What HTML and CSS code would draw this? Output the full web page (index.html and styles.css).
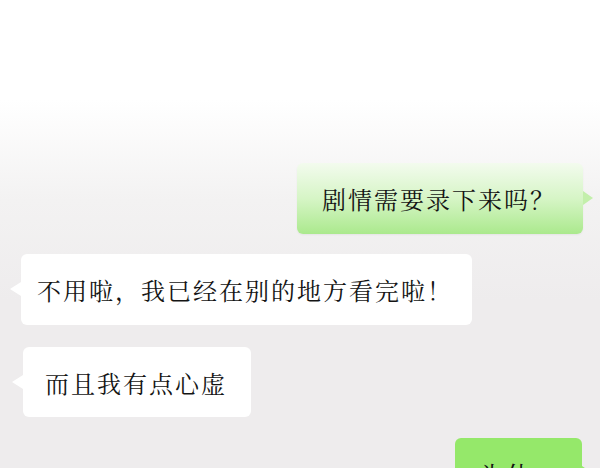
FILE: index.html
```html
<!DOCTYPE html>
<html lang="zh">
<head>
<meta charset="utf-8">
<link rel="stylesheet" href="styles.css">
</head>
<body>
<div class="chat">
  <div class="row row-right">
    <div class="bubble bubble-green-light">剧情需要录下来吗？</div>
  </div>
  <div class="row row-left">
    <div class="bubble bubble-white b2">不用啦，我已经在别的地方看完啦！</div>
  </div>
  <div class="row row-left b3row">
    <div class="bubble bubble-white b3">而且我有点心虚</div>
  </div>
  <div class="row row-right b4row">
    <div class="bubble bubble-green b4">为什么</div>
  </div>
</div>
</body>
</html>
```
FILE: styles.css
```css
html, body {
  margin: 0;
  padding: 0;
}
body {
  width: 600px;
  height: 468px;
  overflow: hidden;
  background: linear-gradient(to bottom, #ffffff 0px, #ffffff 100px, #f3f2f2 200px, #eeeced 300px, #eeeced 468px);
  font-family: "Noto Serif CJK SC", "Noto Sans CJK SC", serif;
  color: #141414;
}
.chat {
  display: flex;
  flex-direction: column;
  padding-top: 163px;
}
.row {
  display: flex;
}
.row-right {
  justify-content: flex-end;
  padding-right: 17px;
}
.row-left {
  justify-content: flex-start;
}
.row + .row {
  margin-top: 20px;
}
.row + .row.b3row {
  margin-top: 22px;
}
.row + .row.b4row {
  margin-top: 21px;
}
.bubble {
  position: relative;
  height: 71px;
  display: flex;
  align-items: center;
  font-size: 24px;
  letter-spacing: 2px;
  border-radius: 6px;
  box-sizing: border-box;
  padding: 0 26px 0 25px;
}
.bubble::after {
  content: "";
  position: absolute;
  top: 28px;
  width: 0;
  height: 0;
  border-top: 7px solid transparent;
  border-bottom: 7px solid transparent;
}
.row-right .bubble::after {
  right: -10px;
  border-left: 10px solid #c3efab;
}
.row-left .bubble::after {
  left: -11px;
  border-right: 11px solid #ffffff;
}
.bubble-green-light {
  width: 286px;
  background: linear-gradient(to bottom, #f3fbee 0%, #d6f5c6 50%, #abe98d 100%);
  box-shadow: 0 1px 2px rgba(0, 0, 0, 0.05);
}
.bubble-white {
  background: #ffffff;
}
.b2 {
  margin-left: 21px;
  width: 451px;
  padding: 0 14px 0 16px;
}
.b3 {
  margin-left: 23px;
  width: 228px;
  height: 70px;
  padding: 0 20px 0 22px;
}
.bubble-green {
  width: 127px;
  background: #95e86a;
  align-items: flex-start;
  padding-top: 18px;
}
.bubble-green::after {
  border-left-color: #95e86a !important;
}
.b4 {
  margin-right: 1px;
}
```
